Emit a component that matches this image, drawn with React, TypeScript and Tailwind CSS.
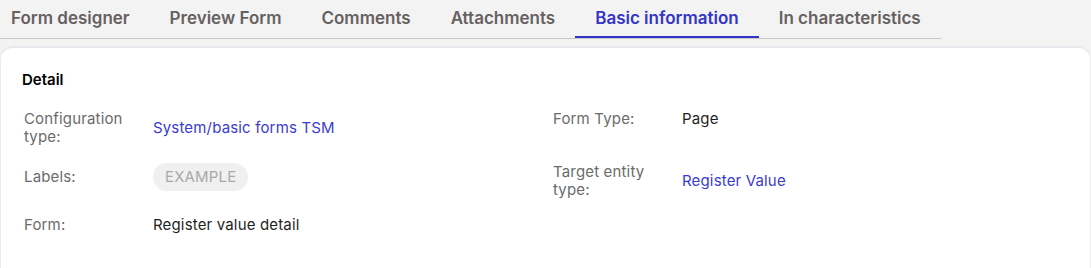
import type { ReactNode } from "react";

const tabs = [
  "Form designer",
  "Preview Form",
  "Comments",
  "Attachments",
  "Basic information",
  "In characteristics",
];

function Field({ label, children }: { label: string; children: ReactNode }) {
  return (
    <div className="h-[53px]">
      <div className="flex items-center tracking-[0.01em]">
        <div className="w-[120px] mr-[9px] shrink-0 text-[15px] leading-[18px] text-[#6b6b6b]">{label}</div>
        <div className="text-[15px] leading-[18px]">{children}</div>
      </div>
    </div>
  );
}

export default function App() {
  const active = "Basic information";

  return (
    <div className="h-[268px] bg-[#f3f3f3] font-['Inter',sans-serif] overflow-hidden">
      <div className="flex w-fit border-b border-[#c6c6c6]">
        {tabs.map((tab, i) => (
          <div
            key={tab}
            className={`${i === 0 ? "pl-[11px] pr-5" : "px-5"} pt-[6px] pb-[6px] border-b-2 text-[17px] leading-[24px] font-semibold ${
              tab === active ? "border-[#3434c8] text-[#3434c8]" : "border-transparent text-[#666161]"
            }`}
          >
            {tab}
          </div>
        ))}
      </div>

      <div className="mt-2 mx-px h-[240px] rounded-xl bg-white border-t border-[#e2e7ef] shadow-[0_0_3px_rgba(0,0,0,0.08)] pt-[22px] pl-[21px] pr-[21px]">
        <h3 className="text-[15px] leading-[20px] font-semibold text-black">Detail</h3>

        <div className="mt-5 ml-[2px] grid grid-cols-[529px_1fr]">
          <div>
            <Field label="Configuration type:">
              <span className="text-[#3b3bd0]">System/basic forms TSM</span>
            </Field>
            <Field label="Labels:">
              <span className="inline-block rounded-full bg-[#f0f0f0] px-3 py-[5px] text-[#a9a9a9]">EXAMPLE</span>
            </Field>
            <Field label="Form:">
              <span className="text-[#1f1f1f]">Register value detail</span>
            </Field>
          </div>
          <div>
            <Field label="Form Type:">
              <span className="text-[#1f1f1f]">Page</span>
            </Field>
            <Field label="Target entity type:">
              <span className="text-[#3b3bd0]">Register Value</span>
            </Field>
          </div>
        </div>
      </div>
    </div>
  );
}
